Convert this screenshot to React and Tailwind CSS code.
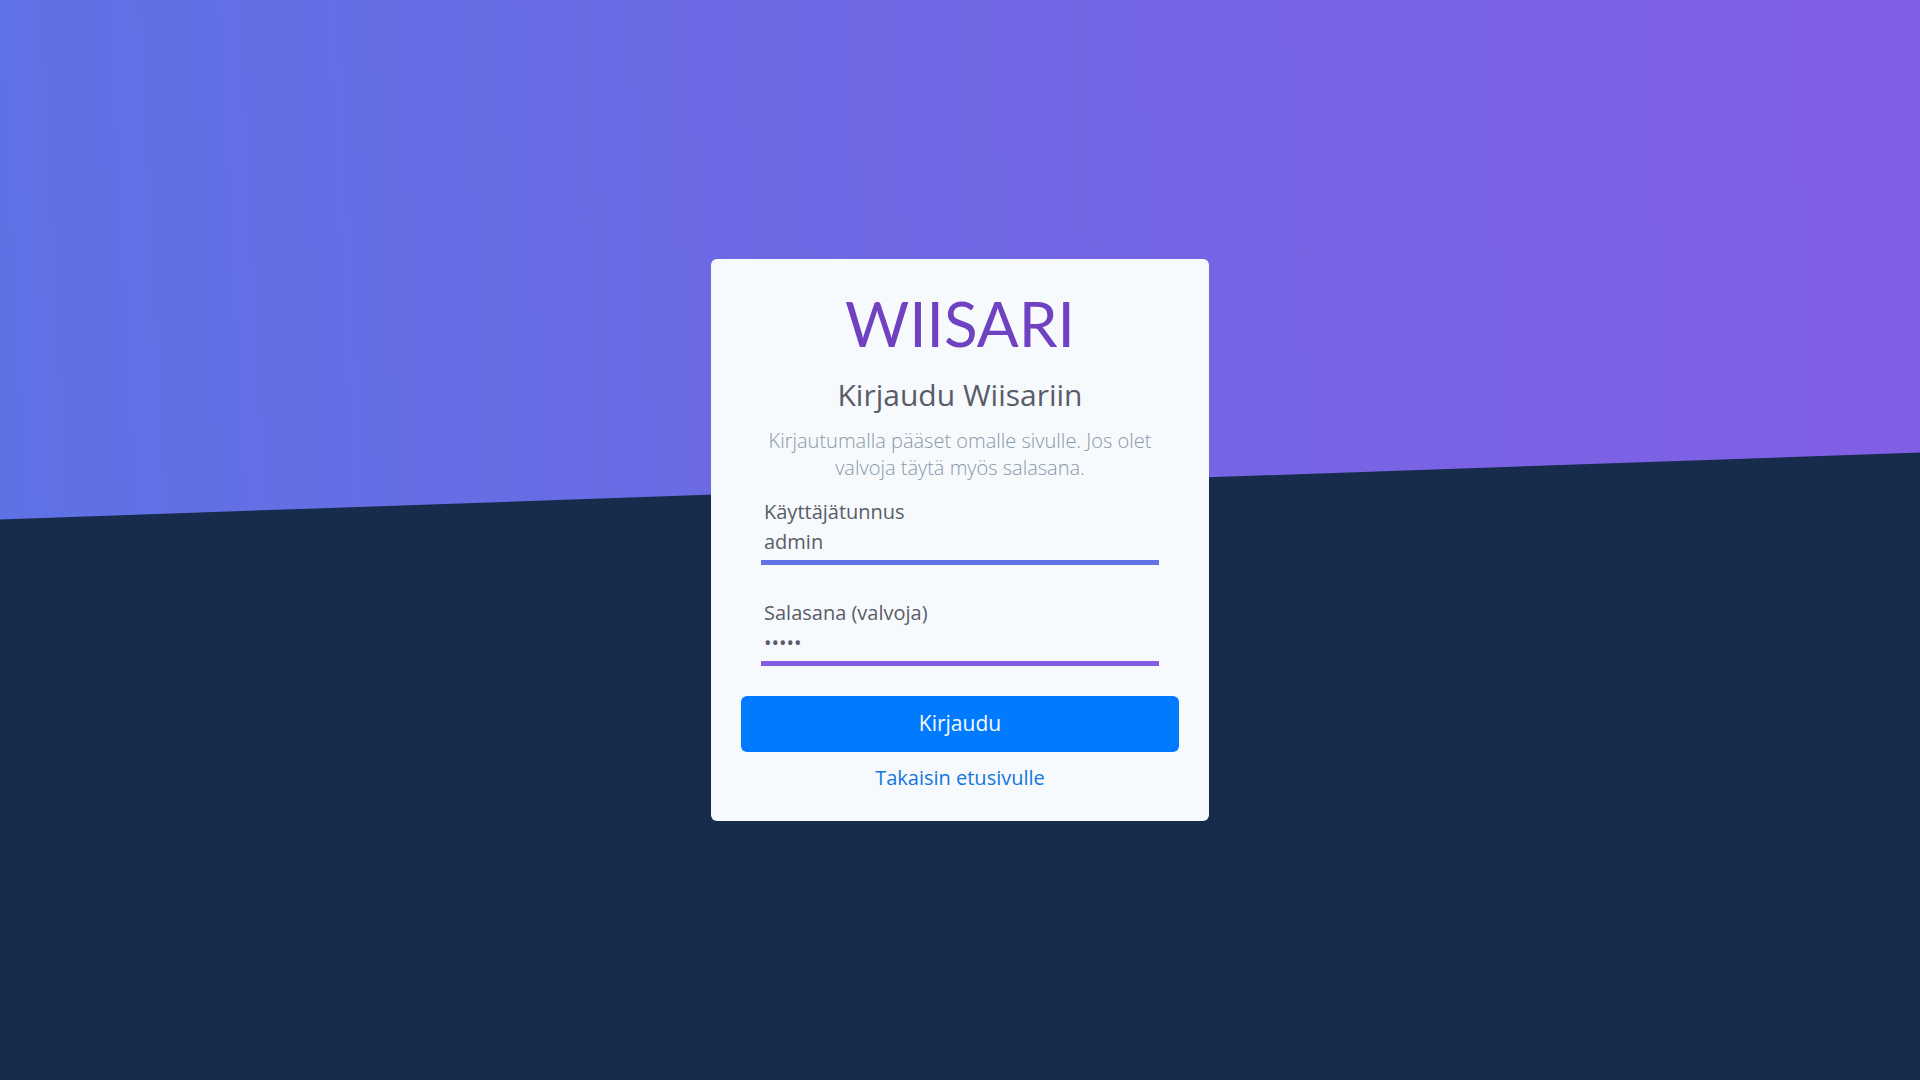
function Field({ id, label, type, value, barClass }) {
  return (
    <div className="mx-5">
      <label htmlFor={id} className="block px-[3px] text-xl leading-8">
        {label}
      </label>
      <input
        id={id}
        type={type}
        defaultValue={value}
        className="block h-7 w-full bg-transparent px-[3px] text-xl leading-7 outline-none"
      />
      <div className={`mt-1 h-[5px] ${barClass}`} />
    </div>
  );
}

export default function App() {
  return (
    <main className="relative isolate flex min-h-screen items-center justify-center bg-[#172b4d] font-['Open_Sans',sans-serif] text-[#5a5c69]">
      <div className="absolute inset-0 -z-10 bg-linear-[87deg,#5e72e4,#825ee4] [clip-path:polygon(0_0,100%_0,100%_41.9%,0_48.1%)]" />
      <form
        onSubmit={(e) => e.preventDefault()}
        className="w-full max-w-[498px] rounded-md bg-[#f7fafc] px-[30px] pt-[30px] pb-[29px]"
      >
        <p className="text-center font-['Lato',sans-serif] text-[62px] leading-[68px] text-[#6f42c1]">
          WIISARI
        </p>
        <h1 className="mt-3 text-center text-3xl leading-[52px]">Kirjaudu Wiisariin</h1>
        <p className="mx-5 mt-1.5 mb-[15px] text-center text-xl leading-[27px] font-light text-[#8898aa]">
          Kirjautumalla pääset omalle sivulle. Jos olet valvoja täytä myös salasana.
        </p>
        <Field id="username" label="Käyttäjätunnus" type="text" value="admin" barClass="bg-[#5e72e4]" />
        <div className="h-8" />
        <Field id="password" label="Salasana (valvoja)" type="password" value="admin" barClass="bg-[#825ee4]" />
        <button
          type="submit"
          className="mt-[30px] block h-14 w-full rounded-md bg-[#007bff] text-[21px] text-[#f7fafc]"
        >
          Kirjaudu
        </button>
        <div className="mt-3 text-center text-xl leading-7">
          <a href="#" className="text-[#1177dd]">Takaisin etusivulle</a>
        </div>
      </form>
    </main>
  );
}
